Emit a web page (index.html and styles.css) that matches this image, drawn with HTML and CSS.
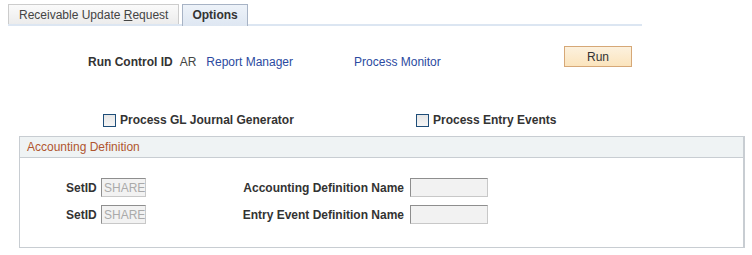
FILE: index.html
```html
<!DOCTYPE html>
<html>
<head>
  <title>Options</title>
  <link rel="stylesheet" href="styles.css">
</head>
<body>

<!-- Page tabs -->
<div class="tabs">
  <div class="tab">Receivable Update <u>R</u>equest</div>
  <div class="tab active">Options</div>
</div>

<!-- Run control row -->
<div class="run-row">
  <span class="lbl">Run Control ID</span>
  <span class="val">AR</span>
  <a class="link" href="#">Report Manager</a>
  <a class="link monitor" href="#">Process Monitor</a>
  <button class="run-btn">Run</button>
</div>

<!-- Options -->
<div class="checks">
  <label class="check first"><span class="box"></span>Process GL Journal Generator</label>
  <label class="check"><span class="box"></span>Process Entry Events</label>
</div>

<div class="group">
  <div class="group-head">Accounting Definition</div>
  <div class="group-body">
    <div class="field-row">
      <span class="lbl">SetID</span>
      <span class="input small">SHARE</span>
      <span class="lbl name">Accounting Definition Name</span>
      <span class="input wide"></span>
    </div>
    <div class="field-row">
      <span class="lbl">SetID</span>
      <span class="input small">SHARE</span>
      <span class="lbl name">Entry Event Definition Name</span>
      <span class="input wide"></span>
    </div>
  </div>
</div>

</body>
</html>
```

FILE: styles.css
```css
body {
  margin: 0;
  font-family: Arial, "Liberation Sans", sans-serif;
  font-size: 12px;
  color: #333;
  background: #fff;
  width: 752px;
  height: 255px;
  overflow: hidden;
}

/* Tabs */
.tabs {
  display: flex;
  gap: 3px;
  margin: 4px 0 0 8px;
  width: 634px;
  border-bottom: 2px solid #dce6f2;
  height: 20px;
}

.tab {
  padding: 0 10px;
  height: 20px;
  line-height: 20px;
  font-size: 12px;
  color: #444;
  border: 1px solid #ccc;
  border-bottom: none;
  background: linear-gradient(#fafafa, #ececec);
  box-sizing: border-box;
}

.tab.active {
  padding: 0 9px;
  font-weight: bold;
  color: #333;
  border-color: #a7b3c5;
  background: linear-gradient(#edf2f9, #dee7f2);
  height: 22px;
}

/* Run control */
.run-row {
  display: flex;
  align-items: center;
  margin: 25px 0 0 88px;
  width: 544px;
  height: 22px;
}

.lbl {
  font-weight: bold;
  color: #333;
}

.val {
  margin-left: 7px;
  color: #444;
}

.link {
  color: #2b4aa0;
  text-decoration: none;
  margin-left: 10px;
}

.link.monitor {
  margin-left: 61px;
}

.run-btn {
  margin-left: auto;
  align-self: flex-start;
  margin-top: -5px;
  width: 68px;
  height: 21px;
  font-family: Arial, "Liberation Sans", sans-serif;
  font-size: 12px;
  color: #333;
  border: 1px solid #d6a877;
  background: linear-gradient(#fcf1de, #fbe4bd);
  padding: 0;
}

/* Checkboxes */
.checks {
  display: flex;
  margin: 39px 0 0 103px;
  height: 16px;
  align-items: center;
}

.check {
  display: flex;
  align-items: center;
  font-weight: bold;
  color: #333;
}

.check.first {
  width: 313px;
}

.box {
  width: 11px;
  height: 11px;
  border: 1px solid #1f4e79;
  background: linear-gradient(#e6e6e6, #f6f6f6);
  margin-right: 4px;
}

/* Group box */
.group {
  margin: 8px 0 0 19px;
  width: 726px;
  border: 1px solid #c8cdd2;
  border-right-width: 2px;
  box-sizing: border-box;
}

.group-head {
  height: 20px;
  line-height: 20px;
  padding-left: 7px;
  background: #eff3f4;
  border-bottom: 1px solid #c8cdd2;
  color: #b0552f;
  font-size: 12px;
}

.group-body {
  padding: 20px 0 23px 46px;
  display: flex;
  flex-direction: column;
  gap: 8px;
}

.field-row {
  display: flex;
  align-items: center;
  height: 19px;
}

.field-row .lbl {
  width: 35px;
}

.field-row .lbl.name {
  width: 194px;
  text-align: right;
  padding-right: 6px;
  box-sizing: border-box;
  white-space: nowrap;
}

.input {
  height: 19px;
  line-height: 19px;
  box-sizing: border-box;
  background: #f2f2f2;
  border: 1px solid #c8c8c8;
  border-top-color: #8e8e8e;
  border-left-color: #8e8e8e;
  color: #aaa;
  padding-left: 2px;
  font-size: 12px;
}

.input.small {
  width: 45px;
  margin-right: 70px;
}

.input.wide {
  width: 78px;
}
```
